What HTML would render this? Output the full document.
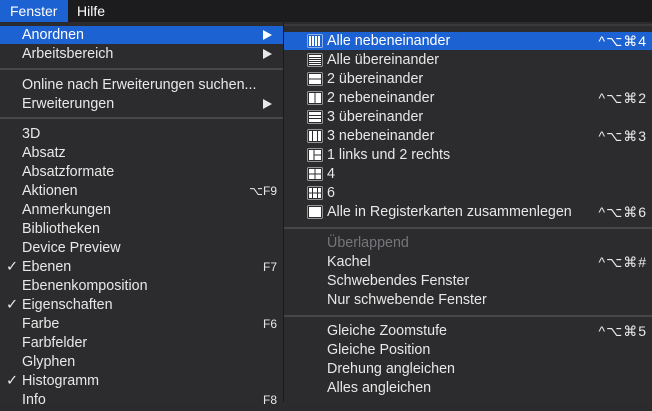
<!DOCTYPE html>
<html><head><meta charset="utf-8"><style>
body{margin:0;width:652px;height:402px;overflow:hidden;background:#2b2b2d;font-family:"Liberation Sans",sans-serif;font-size:14px;color:#e8e8e8;position:relative}
.bar{position:absolute;left:0;top:0;width:652px;height:22px;background:#1c1c1e}
.m{position:absolute;top:0;height:22px;line-height:22px;color:#fff}
.left{position:absolute;left:0;top:22px;width:283px;height:380px;background:#2c2c2e;border-right:1px solid #1a1a1a}
.sub{position:absolute;left:284px;top:24px;width:368px;height:378px;background:#2c2c2e;border-top:2px solid #3a3a3c}
.r{position:absolute;height:19px;line-height:21px;white-space:nowrap;font-size:14.3px}
.hl{position:absolute;background:#1d62d2}
.sep{position:absolute;height:2px;background:#47474a}
.k{position:absolute;height:19px;line-height:21px;text-align:right;font-size:14px;letter-spacing:1px}
.lk{font-size:12px;letter-spacing:0}
.tri{position:absolute;width:0;height:0;border-left:9px solid #e8e8e8;border-top:5px solid transparent;border-bottom:5px solid transparent}
svg{position:absolute}
</style></head><body>
<div class="bar"></div>
<div class="m" style="left:0;width:68px;background:#1d62d2;padding-left:10px;box-sizing:border-box">Fenster</div>
<div class="m" style="left:77px">Hilfe</div>
<div class="left"></div>
<div class="hl" style="left:0;top:26px;width:283px;height:18px"></div>
<div class="r" style="left:22px;top:25px;color:#fff">Anordnen</div><div class="tri" style="left:263px;top:30px;border-left-color:#fff"></div>
<div class="r" style="left:22px;top:44px">Arbeitsbereich</div><div class="tri" style="left:263px;top:49px"></div>
<div class="sep" style="left:0;top:68px;width:283px"></div>
<div class="r" style="left:22px;top:75px">Online nach Erweiterungen suchen...</div>
<div class="r" style="left:22px;top:94px">Erweiterungen</div><div class="tri" style="left:263px;top:99px"></div>
<div class="sep" style="left:0;top:117px;width:283px"></div>
<div class="r" style="left:22px;top:124px">3D</div>
<div class="r" style="left:22px;top:143px">Absatz</div>
<div class="r" style="left:22px;top:162px">Absatzformate</div>
<div class="r" style="left:22px;top:181px">Aktionen</div><div class="k lk" style="right:375px;top:181px">⌥F9</div>
<div class="r" style="left:22px;top:200px">Anmerkungen</div>
<div class="r" style="left:22px;top:219px">Bibliotheken</div>
<div class="r" style="left:22px;top:238px">Device Preview</div>
<div class="r" style="left:6px;top:257px">✓ Ebenen</div><div class="k lk" style="right:375px;top:257px">F7</div>
<div class="r" style="left:22px;top:276px">Ebenenkomposition</div>
<div class="r" style="left:6px;top:295px">✓ Eigenschaften</div>
<div class="r" style="left:22px;top:314px">Farbe</div><div class="k lk" style="right:375px;top:314px">F6</div>
<div class="r" style="left:22px;top:333px">Farbfelder</div>
<div class="r" style="left:22px;top:352px">Glyphen</div>
<div class="r" style="left:6px;top:371px">✓ Histogramm</div>
<div class="r" style="left:22px;top:390px">Info</div><div class="k lk" style="right:375px;top:390px">F8</div>

<div class="sub"></div>
<div class="hl" style="left:284px;top:32px;width:368px;height:18px"></div>
<div class="r" style="left:327px;top:31px;color:#fff">Alle nebeneinander</div><div class="k" style="right:5px;top:31px;color:#fff">^⌥⌘4</div>
<div class="r" style="left:327px;top:50px">Alle übereinander</div>
<div class="r" style="left:327px;top:69px">2 übereinander</div>
<div class="r" style="left:327px;top:88px">2 nebeneinander</div><div class="k" style="right:5px;top:88px">^⌥⌘2</div>
<div class="r" style="left:327px;top:107px">3 übereinander</div>
<div class="r" style="left:327px;top:126px">3 nebeneinander</div><div class="k" style="right:5px;top:126px">^⌥⌘3</div>
<div class="r" style="left:327px;top:145px">1 links und 2 rechts</div>
<div class="r" style="left:327px;top:164px">4</div>
<div class="r" style="left:327px;top:183px">6</div>
<div class="r" style="left:327px;top:202px">Alle in Registerkarten zusammenlegen</div><div class="k" style="right:5px;top:202px">^⌥⌘6</div>
<div class="sep" style="left:284px;top:227px;width:368px"></div>
<div class="r" style="left:327px;top:233px;color:#76767a">Überlappend</div>
<div class="r" style="left:327px;top:252px">Kachel</div><div class="k" style="right:5px;top:252px">^⌥⌘#</div>
<div class="r" style="left:327px;top:271px">Schwebendes Fenster</div>
<div class="r" style="left:327px;top:290px">Nur schwebende Fenster</div>
<div class="sep" style="left:284px;top:315px;width:368px"></div>
<div class="r" style="left:327px;top:321px">Gleiche Zoomstufe</div><div class="k" style="right:5px;top:321px">^⌥⌘5</div>
<div class="r" style="left:327px;top:340px">Gleiche Position</div>
<div class="r" style="left:327px;top:359px">Drehung angleichen</div>
<div class="r" style="left:327px;top:378px">Alles angleichen</div>

<svg style="left:307px;top:34px" width="16" height="14" viewBox="0 0 16 14"><rect x="0.5" y="0.5" width="15" height="13" fill="#fff"/><g stroke="#1d62d2"><rect x="1.5" y="1.5" width="13" height="11" fill="none"/><path d="M4.5 2v10M7.5 2v10M10.5 2v10M13.5 2v10"/></g></svg>
<svg style="left:307px;top:53px" width="16" height="14" viewBox="0 0 16 14"><rect x="0.5" y="0.5" width="15" height="13" fill="#fff"/><g stroke="#2c2c2e"><rect x="1.5" y="1.5" width="13" height="11" fill="none"/><path d="M2 4.5h12M2 6.5h12M2 8.5h12M2 10.5h12"/></g></svg>
<svg style="left:307px;top:72px" width="16" height="14" viewBox="0 0 16 14"><rect x="0.5" y="0.5" width="15" height="13" fill="#fff"/><g stroke="#2c2c2e"><rect x="1.5" y="1.5" width="13" height="11" fill="none"/><path d="M2 7h12"/></g></svg>
<svg style="left:307px;top:91px" width="16" height="14" viewBox="0 0 16 14"><rect x="0.5" y="0.5" width="15" height="13" fill="#fff"/><g stroke="#2c2c2e"><rect x="1.5" y="1.5" width="13" height="11" fill="none"/><path d="M8 2v10"/></g></svg>
<svg style="left:307px;top:110px" width="16" height="14" viewBox="0 0 16 14"><rect x="0.5" y="0.5" width="15" height="13" fill="#fff"/><g stroke="#2c2c2e"><rect x="1.5" y="1.5" width="13" height="11" fill="none"/><path d="M2 5.5h12M2 8.5h12"/></g></svg>
<svg style="left:307px;top:129px" width="16" height="14" viewBox="0 0 16 14"><rect x="0.5" y="0.5" width="15" height="13" fill="#fff"/><g stroke="#2c2c2e"><rect x="1.5" y="1.5" width="13" height="11" fill="none"/><path d="M5.5 2v10M10.5 2v10"/></g></svg>
<svg style="left:307px;top:148px" width="16" height="14" viewBox="0 0 16 14"><rect x="0.5" y="0.5" width="15" height="13" fill="#fff"/><g stroke="#2c2c2e"><rect x="1.5" y="1.5" width="13" height="11" fill="none"/><path d="M7 2v10M7 7h7"/></g></svg>
<svg style="left:307px;top:167px" width="16" height="14" viewBox="0 0 16 14"><rect x="0.5" y="0.5" width="15" height="13" fill="#fff"/><g stroke="#2c2c2e"><rect x="1.5" y="1.5" width="13" height="11" fill="none"/><path d="M8 2v10M2 7h12"/></g></svg>
<svg style="left:307px;top:186px" width="16" height="14" viewBox="0 0 16 14"><rect x="0.5" y="0.5" width="15" height="13" fill="#fff"/><g stroke="#2c2c2e"><rect x="1.5" y="1.5" width="13" height="11" fill="none"/><path d="M5.5 2v10M10.5 2v10M2 7h12"/></g></svg>
<svg style="left:307px;top:205px" width="16" height="14" viewBox="0 0 16 14"><rect x="0.5" y="0.5" width="15" height="13" fill="#fff"/><rect x="1.5" y="1.5" width="13" height="11" fill="none" stroke="#2c2c2e"/></svg>
</body></html>
